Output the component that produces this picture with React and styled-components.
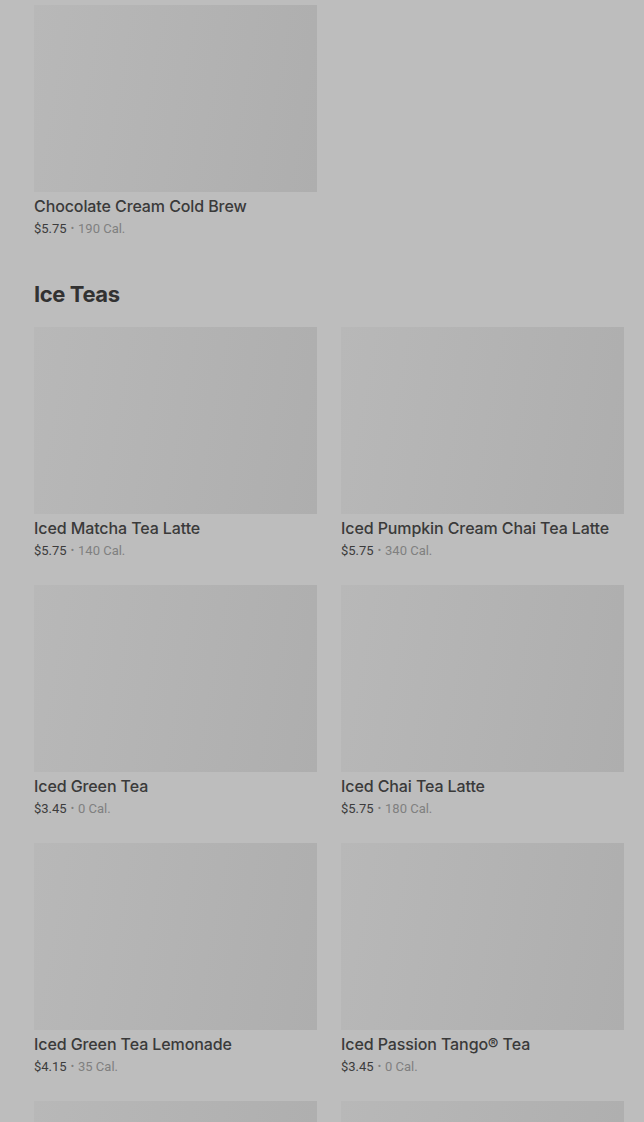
import styled, { createGlobalStyle } from "styled-components"

const Global = createGlobalStyle`
  body {
    margin: 0;
    background: #bdbdbd;
    font-family: Roboto, "Liberation Sans", sans-serif;
  }
`

const Page = styled.main`
  padding: 5px 20px 0 34px;
`

const Section = styled.section`
  margin-bottom: 42px;
`

const Heading = styled.h2`
  margin: 0 0 19px;
  font-family: Inter, "Liberation Sans", sans-serif;
  font-size: 22px;
  line-height: 28px;
  font-weight: 700;
  letter-spacing: -0.4px;
  color: #323232;
`

const Grid = styled.div`
  display: grid;
  grid-template-columns: 283px 283px;
  column-gap: 24px;
  row-gap: 25px;
`

const Card = styled.div`
  display: flex;
  flex-direction: column;
`

const Thumb = styled.div`
  height: 187px;
  background: linear-gradient(100deg, #b8b8b8 0%, #b3b3b3 50%, #aeaeae 100%);
`

const Title = styled.div`
  margin-top: 4px;
  font-family: Inter, "Liberation Sans", sans-serif;
  font-size: 16px;
  line-height: 20px;
  font-weight: 500;
  letter-spacing: -0.1px;
  color: #3a3a3a;
`

const Meta = styled.div`
  margin-top: 4px;
  height: 18px;
  display: flex;
  align-items: center;
  font-size: 13px;
  line-height: 18px;
  color: #3c3c3c;
`

const Cal = styled.span`
  color: #808080;
`

const Dot = styled.span`
  color: #808080;
  font-size: 10px;
  line-height: 1;
  margin: 0 4px;
`

const coldBrew = [{ name: "Chocolate Cream Cold Brew", price: "$5.75", cal: "190 Cal." }]

const teas = [
  { name: "Iced Matcha Tea Latte", price: "$5.75", cal: "140 Cal." },
  { name: "Iced Pumpkin Cream Chai Tea Latte", price: "$5.75", cal: "340 Cal." },
  { name: "Iced Green Tea", price: "$3.45", cal: "0 Cal." },
  { name: "Iced Chai Tea Latte", price: "$5.75", cal: "180 Cal." },
  { name: "Iced Green Tea Lemonade", price: "$4.15", cal: "35 Cal." },
  { name: "Iced Passion Tango® Tea", price: "$3.45", cal: "0 Cal." },
  { name: "Iced Peach Green Tea", price: "$4.15", cal: "60 Cal." },
  { name: "Iced Black Tea", price: "$3.45", cal: "0 Cal." },
]

function Item({ item }) {
  return (
    <Card>
      <Thumb />
      <Title>{item.name}</Title>
      <Meta>
        <span>{item.price}</span>
        <Dot>•</Dot>
        <Cal>{item.cal}</Cal>
      </Meta>
    </Card>
  )
}

export default function App() {
  return (
    <>
      <Global />
      <Page>
        <Section>
          <Grid>
            {coldBrew.map((it) => (
              <Item key={it.name} item={it} />
            ))}
          </Grid>
        </Section>
        <Section>
          <Heading>Ice Teas</Heading>
          <Grid>
            {teas.map((it) => (
              <Item key={it.name} item={it} />
            ))}
          </Grid>
        </Section>
      </Page>
    </>
  )
}
